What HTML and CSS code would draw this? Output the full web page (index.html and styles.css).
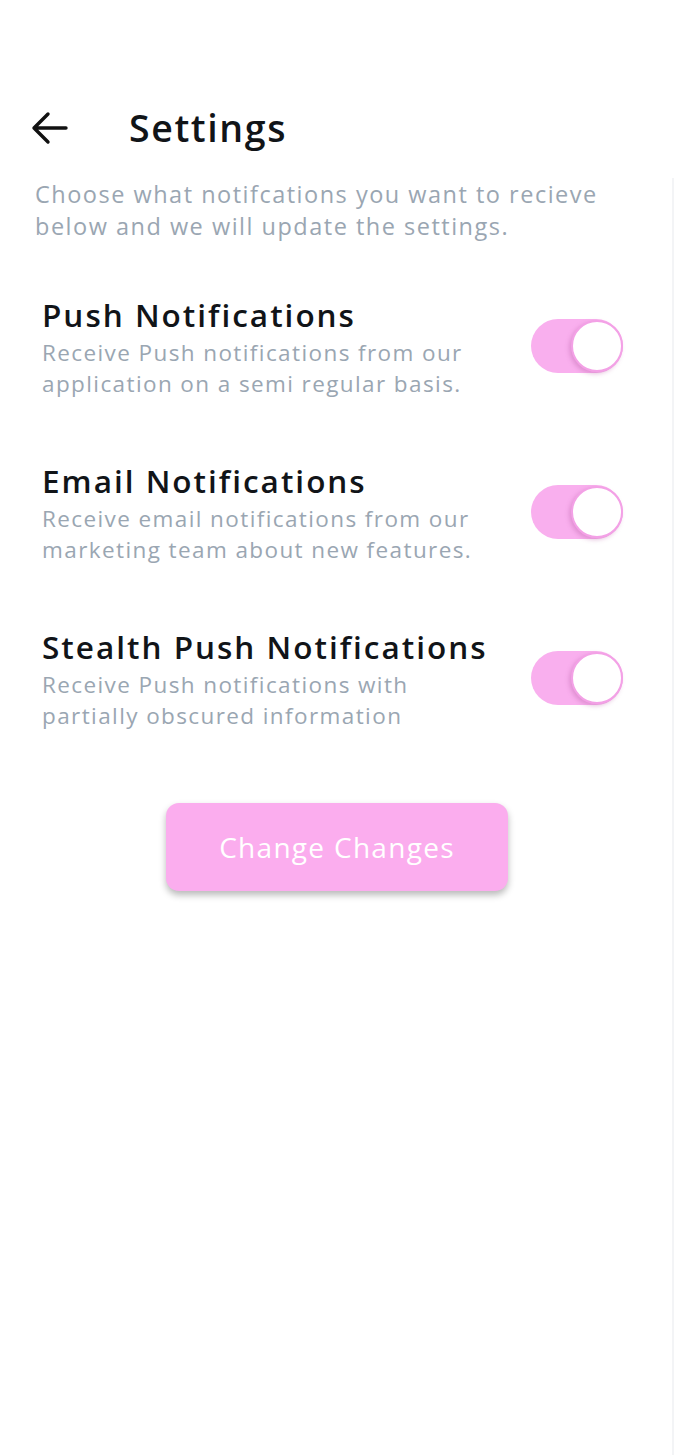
FILE: index.html
```html
<!DOCTYPE html>
<html lang="en">
<head>
<meta charset="utf-8">
<title>Settings</title>
<link rel="stylesheet" href="styles.css">
</head>
<body>
<div class="screen">
  <header class="header">
    <button class="back" aria-label="Back">
      <svg width="38" height="34" viewBox="0 0 38 34" fill="none" stroke="#111" stroke-width="3.4" stroke-linecap="round" stroke-linejoin="round">
        <path d="M35 17H3M17 3L3 17l14 14"/>
      </svg>
    </button>
    <h1 class="title">Settings</h1>
  </header>
  <p class="intro">Choose what notifcations you want to recieve below and we will update the settings.</p>

  <ul class="options">
    <li class="option">
      <div class="option-text">
        <h2 class="option-title">Push Notifications</h2>
        <p class="option-desc">Receive Push notifications from our application on a semi regular basis.</p>
      </div>
      <span class="toggle"><span class="knob"></span></span>
    </li>
    <li class="option">
      <div class="option-text">
        <h2 class="option-title">Email Notifications</h2>
        <p class="option-desc">Receive email notifications from our marketing team about new features.</p>
      </div>
      <span class="toggle"><span class="knob"></span></span>
    </li>
    <li class="option">
      <div class="option-text">
        <h2 class="option-title">Stealth Push Notifications</h2>
        <p class="option-desc">Receive Push notifications with partially obscured information</p>
      </div>
      <span class="toggle"><span class="knob"></span></span>
    </li>
  </ul>

  <div class="actions">
    <button class="primary">Change Changes</button>
  </div>
</div>
</body>
</html>
```

FILE: styles.css
```css
* { box-sizing: border-box; }
html, body { margin: 0; padding: 0; background: #fff; }
body {
  font-family: "Open Sans", "Noto Sans", sans-serif;
  color: #111418;
  width: 674px;
  min-height: 1455px;
}
.screen {
  position: relative;
  min-height: 1455px;
  padding-top: 98px;
}
.screen::after {
  content: "";
  position: absolute;
  right: 0;
  top: 178px;
  bottom: 0;
  width: 2px;
  background: #f3f4f6;
}
.header {
  display: flex;
  align-items: center;
  height: 60px;
  padding-left: 30px;
}
.back {
  background: none;
  border: 0;
  padding: 0;
  width: 40px;
  height: 36px;
  display: flex;
  align-items: center;
  justify-content: center;
  cursor: pointer;
}
.title {
  margin: 0 0 0 59px;
  font-size: 37.5px;
  font-weight: 600;
  line-height: 60px;
  letter-spacing: 1.6px;
}
.intro {
  margin: 20px 0 0 35px;
  width: 600px;
  font-size: 23.5px;
  line-height: 32px;
  color: #9aa6b2;
  letter-spacing: 1.5px;
}
.options {
  list-style: none;
  margin: 51px 0 0;
  padding: 0 51px 0 42px;
  display: flex;
  flex-direction: column;
  gap: 60px;
}
.option {
  display: flex;
  align-items: center;
  justify-content: space-between;
}
.option-text { width: 470px; }
.option-title {
  margin: 0;
  font-size: 31.5px;
  line-height: 44px;
  font-weight: 600;
  letter-spacing: 2px;
  white-space: nowrap;
}
.option-desc {
  margin: 0;
  font-size: 22.5px;
  line-height: 31px;
  color: #9aa6b2;
  letter-spacing: 1.4px;
  width: 460px;
}
.toggle {
  position: relative;
  display: block;
  width: 92px;
  height: 54px;
  border-radius: 27px;
  background: #f9afee;
  flex: none;
}
.knob {
  position: absolute;
  right: 0;
  top: 1px;
  width: 52px;
  height: 52px;
  border-radius: 50%;
  background: #fff;
  border: 2px solid #f3a1e6;
  box-shadow: -2px 2px 4px rgba(180, 90, 160, 0.35);
}
.actions {
  display: flex;
  justify-content: center;
  margin-top: 72px;
}
.primary {
  width: 342px;
  height: 88px;
  border: 0;
  border-radius: 13px;
  background: #fbadee;
  color: #fff;
  font-family: inherit;
  font-size: 28px;
  font-weight: 500;
  letter-spacing: 1.3px;
  box-shadow: 0 4px 7px rgba(0, 0, 0, 0.28);
  cursor: pointer;
}
```
